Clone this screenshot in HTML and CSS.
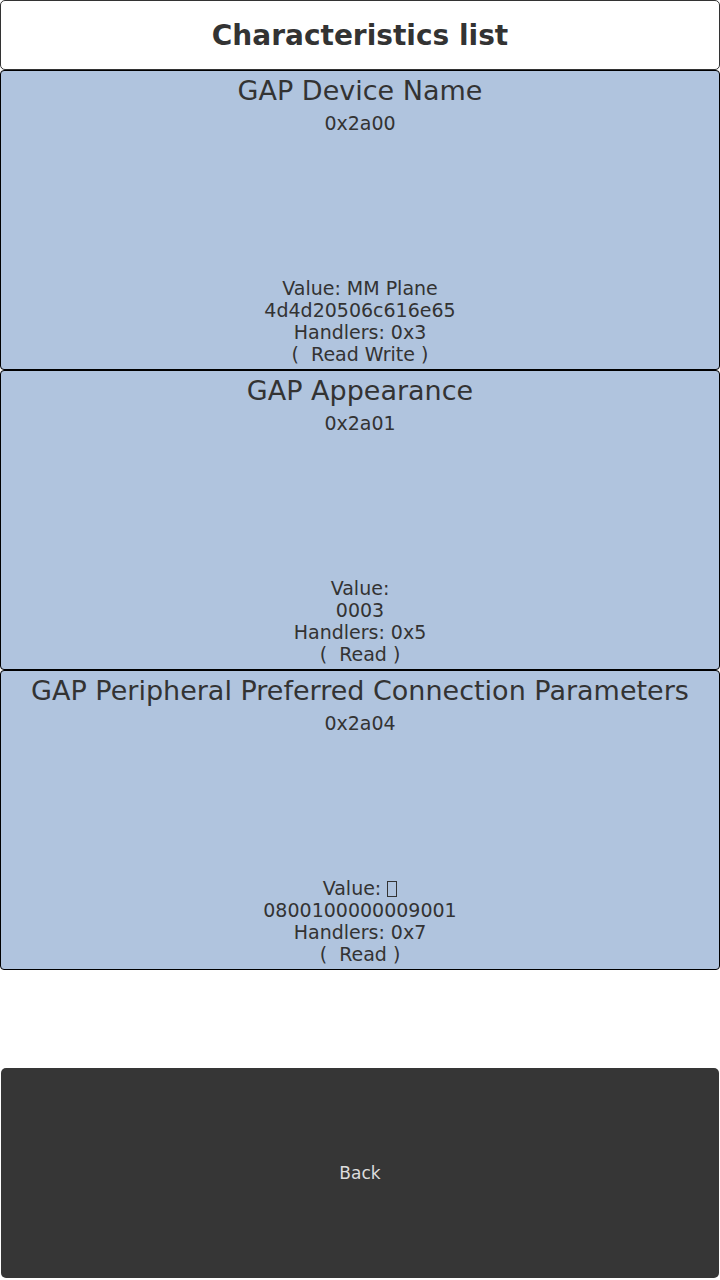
FILE: index.html
```html
<!DOCTYPE html>
<html lang="en">
<head>
    <meta charset="UTF-8">
    <meta name="viewport" content="width=device-width, initial-scale=1.0">
    <title>Characteristics list</title>
    <link rel="stylesheet" href="styles.css">
</head>
<body>
    <div class="header">
        <h1>Characteristics list</h1>
    </div>

    <div class="list">
        <div class="characteristic">
            <div class="top">
                <div class="name">GAP Device Name</div>
                <div class="uuid">0x2a00</div>
            </div>
            <div class="info">
                <div>Value: MM Plane</div>
                <div>4d4d20506c616e65</div>
                <div>Handlers: 0x3</div>
                <div>(&nbsp; Read Write )</div>
            </div>
        </div>

        <div class="characteristic">
            <div class="top">
                <div class="name">GAP Appearance</div>
                <div class="uuid">0x2a01</div>
            </div>
            <div class="info">
                <div>Value: </div>
                <div>0003</div>
                <div>Handlers: 0x5</div>
                <div>(&nbsp; Read )</div>
            </div>
        </div>

        <div class="characteristic">
            <div class="top">
                <div class="name">GAP Peripheral Preferred Connection Parameters</div>
                <div class="uuid">0x2a04</div>
            </div>
            <div class="info">
                <div>Value: <span class="tofu"></span></div>
                <div>0800100000009001</div>
                <div>Handlers: 0x7</div>
                <div>(&nbsp; Read )</div>
            </div>
        </div>
    </div>

    <button class="back">Back</button>
</body>
</html>
```

FILE: styles.css
```css
* {
    margin: 0;
    padding: 0;
    box-sizing: border-box;
    font-family: "DejaVu Sans", sans-serif;
}

body {
    background-color: #fff;
    color: #333;
    width: 720px;
}

.header {
    height: 70px;
    border: 1px solid #333;
    border-radius: 5px;
    display: flex;
    justify-content: center;
    align-items: center;
}

.header h1 {
    font-size: 28px;
    font-weight: bold;
    color: #333;
}

.characteristic {
    height: 300px;
    background-color: #b0c4de;
    border: 1px solid #000;
    border-radius: 4px;
    display: flex;
    flex-direction: column;
    justify-content: space-between;
    text-align: center;
    padding: 4px 0 4px;
}

.name {
    font-size: 27px;
    line-height: 32px;
}

.uuid {
    font-size: 19px;
    line-height: 32px;
}

.info {
    font-size: 19px;
    line-height: 22px;
}

.tofu {
    display: inline-block;
    width: 10px;
    height: 16px;
    border: 1px solid #333;
    vertical-align: -2px;
}

.back {
    display: block;
    width: 718px;
    height: 210px;
    margin: 98px 1px 0;
    border: none;
    border-radius: 5px;
    background-color: #363636;
    color: #ddd;
    font-size: 17px;
}
```
